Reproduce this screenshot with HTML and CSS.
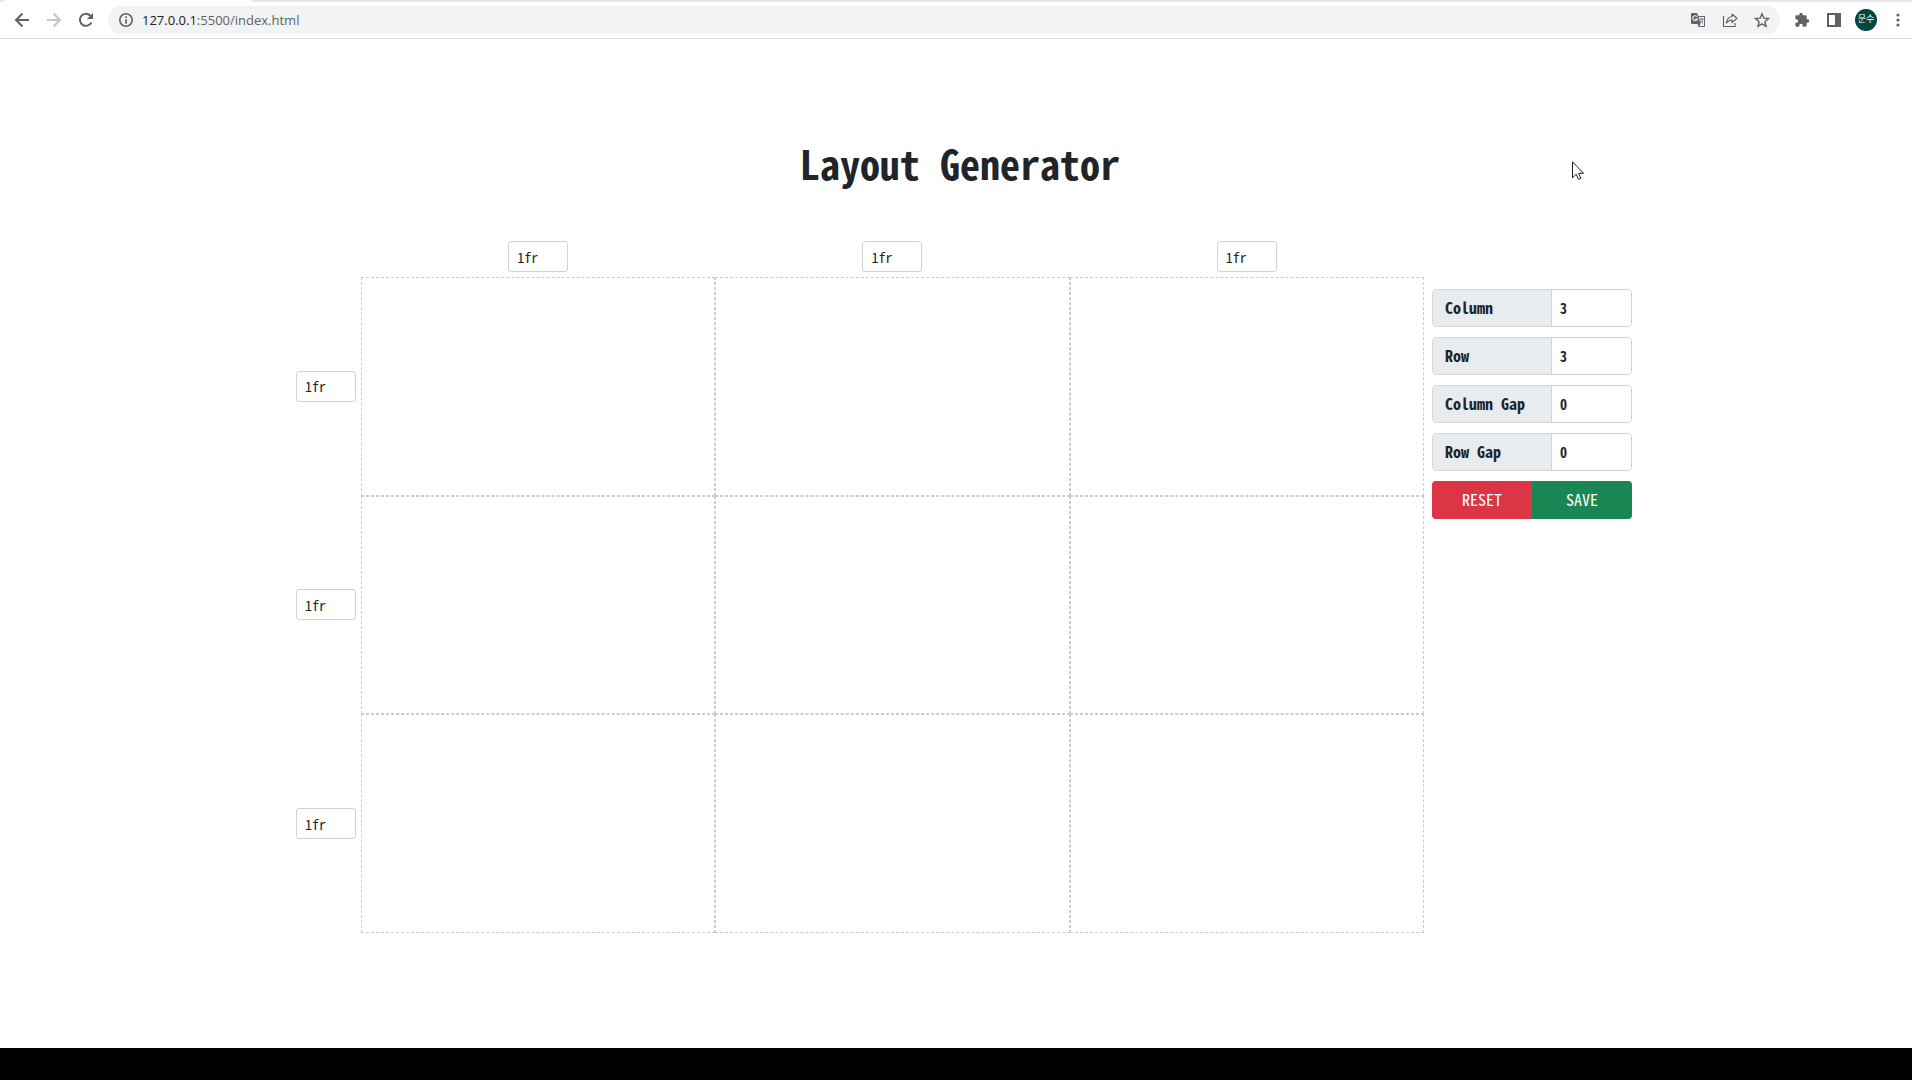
FILE: index.html
```html
<!DOCTYPE html>
<html lang="en">
<head>
<meta charset="utf-8">
<title>Layout Generator</title>
<link rel="stylesheet" href="styles.css">
</head>
<body>
<header class="browser">
  <div class="tab-strip"><div class="tab"></div></div>
  <nav class="toolbar" aria-label="Browser">
    <button class="icon-btn" type="button" aria-label="Back"><svg viewBox="0 0 16 16" width="16" height="16"><path d="M15 8H2M8.500 1.500L2 8l6.500 6.500" fill="none" stroke="#5f6368" stroke-width="2"/></svg></button>
    <button class="icon-btn" type="button" aria-label="Forward"><svg viewBox="0 0 16 16" width="16" height="16"><path d="M1 8h13M7.500 1.500L14 8l-6.500 6.500" fill="none" stroke="#c4c4c2" stroke-width="2"/></svg></button>
    <button class="icon-btn" type="button" aria-label="Reload"><svg viewBox="0 0 16 16" width="16" height="16"><path d="M13.300 10.500A6 6 0 1 1 12.300 3.700L13.500 5" fill="none" stroke="#5f6368" stroke-width="2"/><path d="M15 1v6H9z" fill="#5f6368"/></svg></button>
    <div class="omnibox">
      <button class="icon-btn" type="button" aria-label="Site information"><svg viewBox="0 0 16 16" width="16" height="16"><circle cx="8" cy="8" r="6.200" fill="none" stroke="#5f6368" stroke-width="1.600"/><path d="M7.200 4.300h1.700v1.700H7.200zM7.200 7.200h1.700v4.500H7.200z" fill="#5f6368"/></svg></button>
      <a class="url" href="#"><span class="host">127.0.0.1</span>:5500/index.html</a>
      <button class="icon-btn" type="button" aria-label="Translate"><svg viewBox="0 0 16 16" width="16" height="16"><path d="M2 1h5l1.300 3H14a1 1 0 0 1 1 1v9a1 1 0 0 1-1 1H8.500l-1-3H2a1 1 0 0 1-1-1V2a1 1 0 0 1 1-1z" fill="#5f6368"/><path d="M8.700 5H14v9H9.200l1.300-2z" fill="#f1f3f4"/><path d="M7.200 4.800A2.400 2.400 0 1 0 7.400 7H5.200" fill="none" stroke="#f1f3f4" stroke-width="1.100"/><path d="M9.500 7h4M11.500 6v1M13 7c-.5 2-1.500 3-3 4M10.300 8.300c.7 1.300 1.600 2.200 2.700 3" fill="none" stroke="#5f6368" stroke-width=".9"/></svg></button>
      <button class="icon-btn" type="button" aria-label="Share"><svg viewBox="0 0 16 16" width="16" height="16"><path d="M1.500 4v10.500h11.500V11" fill="none" stroke="#5f6368" stroke-width="1.200"/><path d="M10 2l5 4.300-5 4.200V8C7.500 8 5.700 9 4.500 11c.3-3.500 2-6 5.500-6.500z" fill="none" stroke="#5f6368" stroke-width="1.200" stroke-linejoin="round"/></svg></button>
      <button class="icon-btn" type="button" aria-label="Bookmark"><svg viewBox="0 0 16 16" width="16" height="16"><path d="M8 1.800l1.800 4.400 4.700.4-3.600 3.100 1.100 4.600L8 11.800l-4 2.500 1.100-4.600L1.500 6.600l4.700-.4z" fill="none" stroke="#5f6368" stroke-width="1.400"/></svg></button>
    </div>
    <button class="icon-btn" type="button" aria-label="Extensions"><svg viewBox="0 0 24 24" width="16" height="16"><path d="M20.500 11H19V7a2 2 0 0 0-2-2h-4V3.500a2.500 2.500 0 0 0-5 0V5H4a2 2 0 0 0-2 2v3.800h1.500a2.700 2.700 0 0 1 0 5.400H2V20c0 1.100.9 2 2 2h3.800v-1.500a2.700 2.700 0 0 1 5.400 0V22H17a2 2 0 0 0 2-2v-4h1.500a2.500 2.500 0 0 0 0-5z" fill="#5f6368"/></svg></button>
    <button class="icon-btn" type="button" aria-label="Side panel"><svg viewBox="0 0 16 16" width="16" height="16"><path d="M1 1h14v14H1zM3 3v10h6V3z" fill="#5f6368" fill-rule="evenodd"/></svg></button>
    <button class="icon-btn" type="button" aria-label="Profile"><span class="avatar">문수</span></button>
    <button class="icon-btn" type="button" aria-label="Menu"><svg viewBox="0 0 16 16" width="16" height="16"><g fill="#5f6368"><circle cx="8" cy="3" r="1.600"/><circle cx="8" cy="8" r="1.600"/><circle cx="8" cy="13" r="1.600"/></g></svg></button>
  </nav>
</header>

<main class="page">
  <h1 class="title">Layout Generator</h1>
  <div class="generator">
    <div class="tracks tracks-columns">
      <input class="track" value="1fr" aria-label="Column 1 size">
      <input class="track" value="1fr" aria-label="Column 2 size">
      <input class="track" value="1fr" aria-label="Column 3 size">
    </div>
    <div class="tracks tracks-rows">
      <input class="track" value="1fr" aria-label="Row 1 size">
      <input class="track" value="1fr" aria-label="Row 2 size">
      <input class="track" value="1fr" aria-label="Row 3 size">
    </div>
    <div class="board">
      <div class="cell"></div><div class="cell"></div><div class="cell"></div>
      <div class="cell"></div><div class="cell"></div><div class="cell"></div>
      <div class="cell"></div><div class="cell"></div><div class="cell"></div>
    </div>
    <form class="settings">
      <div class="field"><label for="column">Column</label><input id="column" value="3" inputmode="numeric"></div>
      <div class="field"><label for="row">Row</label><input id="row" value="3" inputmode="numeric"></div>
      <div class="field"><label for="column-gap">Column Gap</label><input id="column-gap" value="0" inputmode="numeric"></div>
      <div class="field"><label for="row-gap">Row Gap</label><input id="row-gap" value="0" inputmode="numeric"></div>
      <div class="actions"><button class="reset" type="button">RESET</button><button class="save" type="button">SAVE</button></div>
    </form>
  </div>
</main>
<footer class="taskbar"></footer>
<svg class="pointer" viewBox="0 0 12 19" width="12" height="19" aria-hidden="true"><path d="M.5.800v16l3.700-3.600 2.300 5.200 2.300-1-2.200-5.100h5z" fill="#fff" stroke="#1c1c28"/></svg>
</body>
</html>
```

FILE: styles.css
```css
* { box-sizing: border-box; }

body {
  margin: 0;
  min-height: 100vh;
  display: flex;
  flex-direction: column;
  background: #fff;
  color: #212529;
  font-family: "Noto Sans Mono CJK KR", "Liberation Mono", monospace;
  font-size: 16px;
  line-height: 24px;
}

input, button { font: inherit; color: inherit; }

/* Browser toolbar */
.browser { border-bottom: 1px solid #dadce0; }
.tab-strip { height: 2px; padding-left: 4px; background: #e7e6ec; }
.tab { width: 248px; height: 2px; border-radius: 2px 2px 0 0; background: #fff; }
.toolbar { display: flex; align-items: center; height: 36px; padding-left: 6px; }
.icon-btn {
  display: flex;
  align-items: center;
  justify-content: center;
  flex: none;
  width: 32px;
  height: 28px;
  padding: 0;
  border: 0;
  background: none;
}
.omnibox {
  flex: 1;
  display: flex;
  align-items: center;
  height: 28px;
  margin: 0 6px;
  padding: 0 2px;
  border-radius: 14px;
  background: #f1f3f4;
}
.toolbar > .icon-btn:last-child { margin-right: -2px; }
.url {
  flex: 1;
  color: #5f6368;
  font: 13px/20px "Open Sans", "Noto Sans", sans-serif;
  text-decoration: none;
}
.host { color: #202124; }
.avatar {
  width: 22px;
  height: 22px;
  border-radius: 50%;
  background: #00473e;
  color: #fff;
  font: 9px/20px "Noto Sans CJK KR", sans-serif;
  text-align: center;
}

/* Page */
.page {
  flex: 1;
  display: flex;
  flex-direction: column;
  align-items: center;
  padding: 100px 0 115px 8px;
}
.title { margin: 0 0 54px; font-size: 40px; line-height: 48px; font-weight: 700; }
.generator {
  flex: 1;
  width: 100%;
  max-width: 1344px;
  display: grid;
  grid-template: 36px 1fr / 73px 1fr 208px;
}
.tracks { display: grid; justify-items: center; }
.tracks-columns { grid-column: 2; grid-template-columns: repeat(3, 1fr); }
.tracks-rows {
  grid-column: 1;
  grid-row: 2;
  grid-template-rows: repeat(3, 1fr);
  align-items: center;
  justify-items: end;
  padding-right: 5px;
}
.track {
  width: 60px;
  height: 31px;
  padding: 4px 8px;
  border: 1px solid #ced4da;
  border-radius: 3px;
  background: #fff;
  font-size: 14px;
  line-height: 21px;
}
.board {
  grid-area: 2 / 2;
  display: grid;
  grid-template: repeat(3, 1fr) / repeat(3, 1fr);
}
.cell { border: 1px dashed #ccc; }

/* Settings */
.settings {
  grid-area: 2 / 3;
  display: flex;
  flex-direction: column;
  gap: 10px;
  padding: 12px 0 0 8px;
}
.field, .actions {
  display: flex;
  height: 38px;
  border-radius: 4px;
  overflow: hidden;
}
.field { border: 1px solid #ced4da; font-weight: 700; }
.field label {
  width: 119px;
  padding: 5px 12px 7px;
  border-right: 1px solid #ced4da;
  background: #e9ecef;
}
.field input {
  flex: 1;
  min-width: 0;
  padding: 0 8px;
  border: 0;
  background: #fff;
  font-size: 14px;
  font-variant-numeric: slashed-zero;
}
.actions button { flex: 1; padding: 0 0 2px; border: 0; color: #fff; }
.reset { background: #dc3545; }
.save { background: #198754; }

.taskbar { height: 32px; background: #000; }
.pointer { position: absolute; left: 1572px; top: 161px; }
```
